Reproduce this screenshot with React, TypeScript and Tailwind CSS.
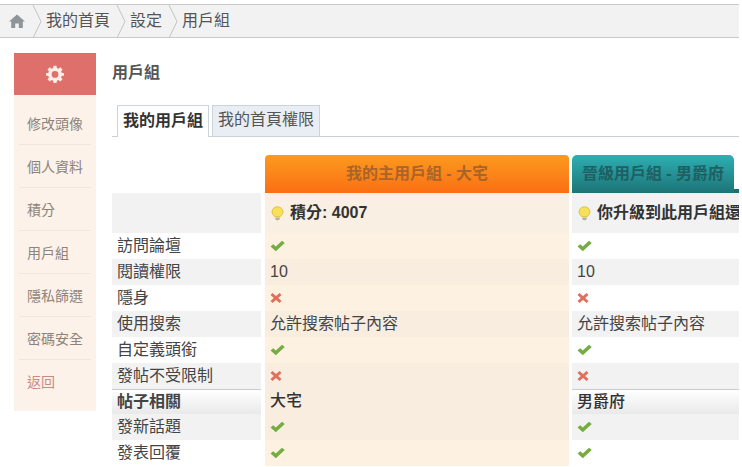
import { Fragment, type ReactNode } from 'react';

const font = { fontFamily: '"Liberation Sans", "Noto Sans CJK TC", sans-serif' };

const menu = ['修改頭像', '個人資料', '積分', '用戶組', '隱私篩選', '密碼安全'];

type Row = { label: string; main: ReactNode; next: ReactNode; section?: boolean };

function Check() {
  return (
    <svg width="15" height="12" viewBox="0 0 14 11" className="block">
      <path d="M0.5 6 L3 3.800 L5.400 6 L11.200 0.600 L13.800 2.600 L5.400 10.400 Z" fill="#75ad42" />
    </svg>
  );
}

function Cross() {
  return (
    <svg width="12" height="12" viewBox="0 0 12 11" className="block">
      <path d="M0.500 2.400 L2.400 0.500 L6 3.600 L9.600 0.500 L11.500 2.400 L8.200 5.500 L11.500 8.600 L9.600 10.500 L6 7.400 L2.400 10.500 L0.500 8.600 L3.800 5.500 Z" fill="#e0705c" />
    </svg>
  );
}

function Bulb() {
  return (
    <svg width="13" height="15" viewBox="0 0 13 15" className="shrink-0">
      <path d="M6.500 0.800 C9.600 0.800 12 3 12 5.700 C12 7.800 10.400 8.800 9.400 10.600 L3.600 10.600 C2.600 8.800 1 7.800 1 5.700 C1 3 3.400 0.800 6.500 0.800 Z" fill="#f7e05a" stroke="#d9b92f" strokeWidth="0.8" />
      <path d="M4.200 11.600 H8.800 V13 L7.600 14.200 H5.400 L4.200 13 Z" fill="#b9b39a" />
    </svg>
  );
}

const rows: Row[] = [
  { label: '訪問論壇', main: <Check />, next: <Check /> },
  { label: '閱讀權限', main: '10', next: '10' },
  { label: '隱身', main: <Cross />, next: <Cross /> },
  { label: '使用搜索', main: '允許搜索帖子內容', next: '允許搜索帖子內容' },
  { label: '自定義頭銜', main: <Check />, next: <Check /> },
  { label: '發帖不受限制', main: <Cross />, next: <Cross /> },
  { label: '帖子相關', main: '大宅', next: '男爵府', section: true },
  { label: '發新話題', main: <Check />, next: <Check /> },
  { label: '發表回覆', main: <Check />, next: <Check /> },
];

function Crumb({ children }: { children: ReactNode }) {
  return (
    <div className="flex h-full items-center">
      <svg width="14" height="33" viewBox="0 0 14 33" className="shrink-0">
        <path d="M1 0 L9 16.500 L1 33" fill="none" stroke="#c4c4c4" strokeWidth="1" />
      </svg>
      <span className="pb-px">{children}</span>
    </div>
  );
}

export default function App() {
  return (
    <div className="h-[467px] w-[742px] overflow-hidden bg-white text-[16px] leading-none text-[#444]" style={font}>
      <div className="pt-1 pr-[3px]">
        <div className="flex h-[34px] items-center border-y border-[#c9c9c9] bg-[#f2f2f3] pl-[9px] text-[#555]">
          <svg width="16" height="14" viewBox="0 0 16 14" className="mr-[7px] shrink-0">
            <path d="M8 0.500 L16 7.500 L13.800 7.500 L13.800 14 L9.800 14 L9.800 9.500 L6.200 9.500 L6.200 14 L2.200 14 L2.200 7.500 L0 7.500 Z" fill="#8f9498" />
          </svg>
          <Crumb>我的首頁</Crumb>
          <div className="w-[6px]" />
          <Crumb>設定</Crumb>
          <div className="w-[6px]" />
          <Crumb>用戶組</Crumb>
        </div>
      </div>

      <div className="flex pt-[15px] pl-[14px]">
        <aside className="w-[82px] shrink-0">
          <div className="flex h-[42px] items-center justify-center bg-[#de6f6a]">
            <svg width="18" height="18" viewBox="0 0 24 24" fill="#fdeee6">
              <path
                fillRule="evenodd"
                d="M10 1h4l.6 3.100 1.900.8L19.100 3l2.900 2.900-1.900 2.600.8 1.900L24 11v3l-3.100.6-.8 1.900 1.900 2.600-2.900 2.900-2.600-1.900-1.900.8L14 24h-4l-.6-3.100-1.900-.8L4.900 22 2 19.100l1.900-2.600-.8-1.900L0 14v-3l3.100-.6.8-1.900L2 5.900 4.900 3l2.600 1.900 1.900-.8z M12 8a4.500 4.500 0 1 0 0 9 4.500 4.500 0 0 0 0-9z"
              />
            </svg>
          </div>
          <ul className="bg-[#fcf2ea] pt-[7px] pb-2 text-[14px] text-[#8f8379]">
            {menu.map((item) => (
              <li key={item} className="mx-[5px] flex h-[43px] items-center border-b border-[#f3e6da] pt-px pl-2">
                {item}
              </li>
            ))}
            <li className="mx-[5px] flex h-[43px] items-center pt-px pl-2 text-[#c98a84]">返回</li>
          </ul>
        </aside>

        <main className="ml-4 w-[627px] min-w-0 shrink-0">
          <h2 className="flex h-[42px] items-center pb-[2px] font-bold text-[#555]">用戶組</h2>

          <div className="mt-[10px] flex h-[32px] items-end border-b border-[#c9cfd6] pl-[5px]">
            <div className="-mb-px flex h-[32px] items-center border border-b-0 border-[#cdd5dc] bg-white px-[5px] pb-[2px] font-bold text-[#333]">
              我的用戶組
            </div>
            <div className="-mb-px ml-[3px] flex h-[32px] items-center border border-[#c9d3dc] bg-[#e8eef4] px-[5px] pb-[2px] text-[#555]">
              我的首頁權限
            </div>
          </div>

          <div className="mt-[18px] grid grid-cols-[150px_304px_167px] gap-x-[3px] overflow-hidden">
            <div />
            <div className="flex h-[38px] items-center justify-center rounded-t-[4px] bg-gradient-to-b from-[#fb9a1e] to-[#fb6e14] pb-px font-bold text-[#a9642a]">
              我的主用戶組 - 大宅
            </div>
            <div className="relative h-[38px] bg-white">
              <div className="absolute right-0 bottom-0 h-1 w-[6px] bg-[#1d6f73]" />
              <div className="relative flex h-[38px] w-[162px] items-center justify-center rounded-t-[5px] bg-gradient-to-b from-[#2eb0b2] to-[#1d7478] pb-px font-bold whitespace-nowrap text-[#1f5f62]">
                晉級用戶組 - 男爵府
              </div>
            </div>

            <div className="mr-px h-10 bg-[#f2f2f3]" />
            <div className="flex h-10 items-center gap-[6px] bg-[#f9efe2] pl-[6px] font-bold text-[#333]">
              <Bulb />
              <span className="pb-px">積分: 4007</span>
            </div>
            <div className="flex h-10 items-center gap-[6px] overflow-hidden bg-[#f2f2f3] pl-[6px] font-bold whitespace-nowrap text-[#333]">
              <Bulb />
              <span className="pb-px">你升級到此用戶組還</span>
            </div>

            {rows.map((row, i) => {
              const odd = i % 2 === 1;
              const height = row.section ? 'h-[25px]' : 'h-[26px]';
              const label = row.section
                ? 'bg-gradient-to-b from-white to-[#e9e9ea] border-t border-[#c9ccd2] font-bold text-[#333]'
                : odd
                  ? 'bg-[#f2f2f3]'
                  : 'bg-white';
              const main = row.section
                ? 'bg-[#f8eddf] font-medium text-[#333]'
                : odd
                  ? 'bg-[#f8eddf]'
                  : 'bg-[#fdf2e2]';
              const next = row.section
                ? 'bg-gradient-to-b from-white to-[#e9e9ea] border-t border-[#c9ccd2] font-medium text-[#333]'
                : odd
                  ? 'bg-[#f2f2f3]'
                  : 'bg-white';
              return (
                <Fragment key={row.label}>
                  <div className={`mr-px flex items-center pl-[5px] text-[#444] ${height} ${label}`}>
                    <span className="pb-px">{row.label}</span>
                  </div>
                  <div className={`flex items-center pl-[5px] ${height} ${main}`}>
                    <span className="pb-px">{row.main}</span>
                  </div>
                  <div className={`flex items-center pl-[5px] ${height} ${next}`}>
                    <span className="pb-px">{row.next}</span>
                  </div>
                </Fragment>
              );
            })}
          </div>
        </main>
      </div>
    </div>
  );
}
